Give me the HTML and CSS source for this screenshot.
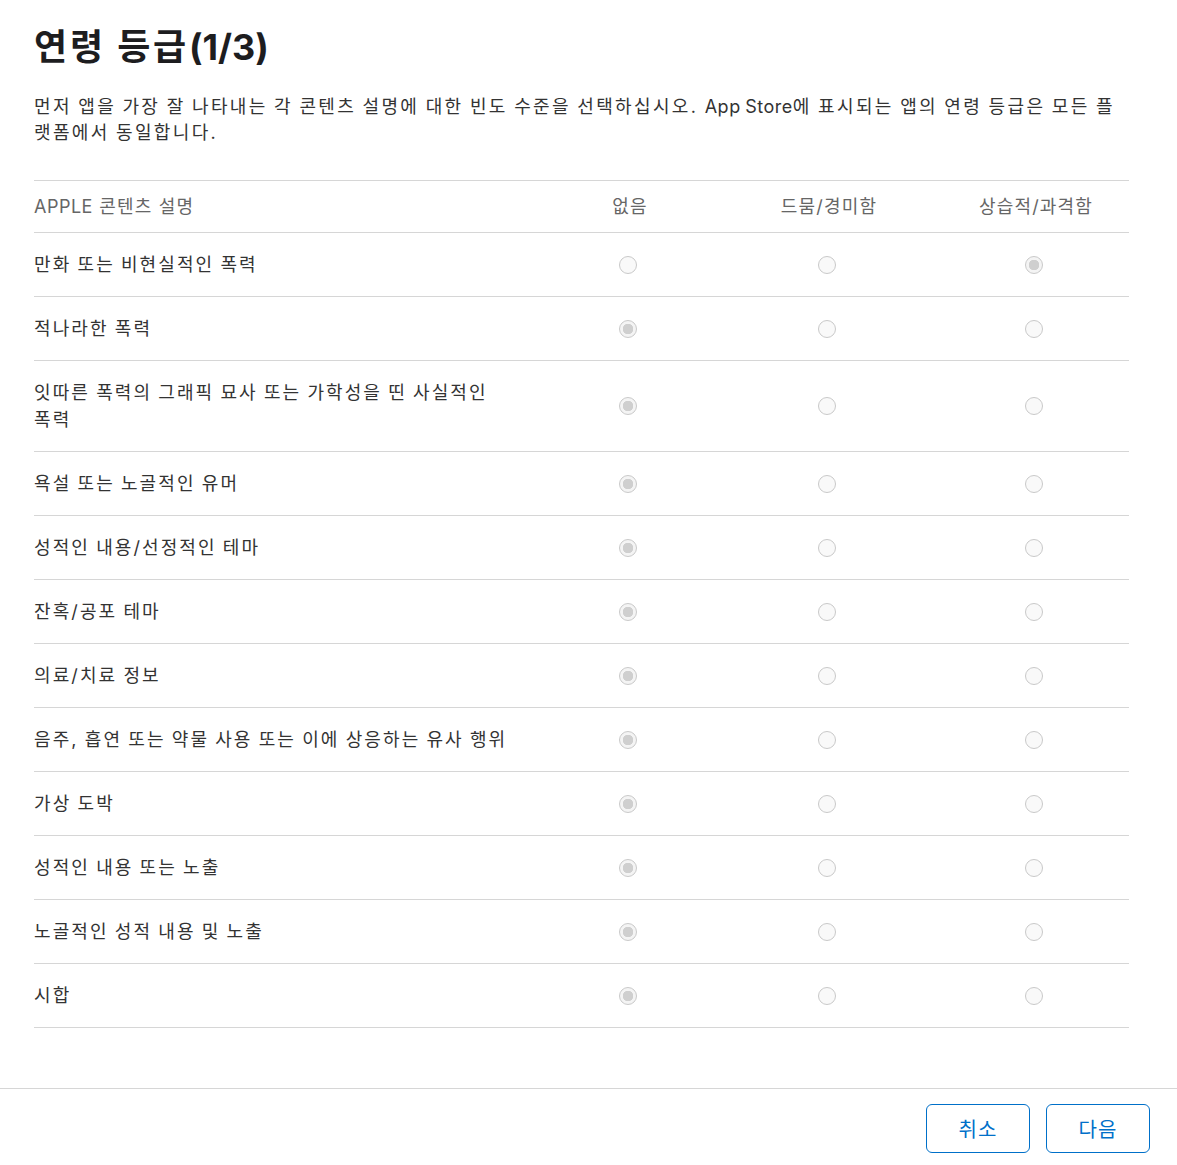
FILE: index.html
```html
<!DOCTYPE html>
<html lang="ko">
<head>
<meta charset="utf-8">
<title>연령 등급</title>
<link rel="stylesheet" href="styles.css">
</head>
<body>
<div class="page">
  <main class="content">
    <h1 class="title">연령 등급<span class="lat">(1/3)</span></h1>
    <p class="desc">먼저 앱을 가장 잘 나타내는 각 콘텐츠 설명에 대한 빈도 수준을 선택하십시오. <span class="lat">App Store</span>에 표시되는 앱의 연령 등급은 모든 플랫폼에서 동일합니다.</p>
    <div class="table">
      <div class="row head">
        <div class="label"><span class="lat">APPLE</span> 콘텐츠 설명</div>
        <div class="cell">없음</div>
        <div class="cell">드뭄/경미함</div>
        <div class="cell">상습적/과격함</div>
      </div>
      <div class="row">
        <div class="label">만화 또는 비현실적인 폭력</div>
        <div class="cell"><span class="radio"></span></div>
        <div class="cell"><span class="radio"></span></div>
        <div class="cell"><span class="radio on"></span></div>
      </div>
      <div class="row">
        <div class="label">적나라한 폭력</div>
        <div class="cell"><span class="radio on"></span></div>
        <div class="cell"><span class="radio"></span></div>
        <div class="cell"><span class="radio"></span></div>
      </div>
      <div class="row">
        <div class="label">잇따른 폭력의 그래픽 묘사 또는 가학성을 띤 사실적인 폭력</div>
        <div class="cell"><span class="radio on"></span></div>
        <div class="cell"><span class="radio"></span></div>
        <div class="cell"><span class="radio"></span></div>
      </div>
      <div class="row">
        <div class="label">욕설 또는 노골적인 유머</div>
        <div class="cell"><span class="radio on"></span></div>
        <div class="cell"><span class="radio"></span></div>
        <div class="cell"><span class="radio"></span></div>
      </div>
      <div class="row">
        <div class="label">성적인 내용/선정적인 테마</div>
        <div class="cell"><span class="radio on"></span></div>
        <div class="cell"><span class="radio"></span></div>
        <div class="cell"><span class="radio"></span></div>
      </div>
      <div class="row">
        <div class="label">잔혹/공포 테마</div>
        <div class="cell"><span class="radio on"></span></div>
        <div class="cell"><span class="radio"></span></div>
        <div class="cell"><span class="radio"></span></div>
      </div>
      <div class="row">
        <div class="label">의료/치료 정보</div>
        <div class="cell"><span class="radio on"></span></div>
        <div class="cell"><span class="radio"></span></div>
        <div class="cell"><span class="radio"></span></div>
      </div>
      <div class="row">
        <div class="label">음주, 흡연 또는 약물 사용 또는 이에 상응하는 유사 행위</div>
        <div class="cell"><span class="radio on"></span></div>
        <div class="cell"><span class="radio"></span></div>
        <div class="cell"><span class="radio"></span></div>
      </div>
      <div class="row">
        <div class="label">가상 도박</div>
        <div class="cell"><span class="radio on"></span></div>
        <div class="cell"><span class="radio"></span></div>
        <div class="cell"><span class="radio"></span></div>
      </div>
      <div class="row">
        <div class="label">성적인 내용 또는 노출</div>
        <div class="cell"><span class="radio on"></span></div>
        <div class="cell"><span class="radio"></span></div>
        <div class="cell"><span class="radio"></span></div>
      </div>
      <div class="row">
        <div class="label">노골적인 성적 내용 및 노출</div>
        <div class="cell"><span class="radio on"></span></div>
        <div class="cell"><span class="radio"></span></div>
        <div class="cell"><span class="radio"></span></div>
      </div>
      <div class="row">
        <div class="label">시합</div>
        <div class="cell"><span class="radio on"></span></div>
        <div class="cell"><span class="radio"></span></div>
        <div class="cell"><span class="radio"></span></div>
      </div>
    </div>
  </main>
  <footer class="footer">
    <button class="btn">취소</button>
    <button class="btn">다음</button>
  </footer>
</div>
</body>
</html>
```

FILE: styles.css
```css
* { box-sizing: border-box; }
html, body { margin: 0; padding: 0; background: #fff; }
body {
  font-family: "Inter", "Noto Sans CJK KR", sans-serif;
  color: #333;
}
.page {
  min-height: 100vh;
  display: flex;
  flex-direction: column;
}
.content {
  flex: 1;
  padding: 27px 48px 0 34px;
}
.lat { letter-spacing: 0.5px; }
.title {
  margin: 0;
  font-size: 36px;
  line-height: 40px;
  font-weight: 700;
  color: #1d1d1f;
  letter-spacing: 2.8px;
}
.title .lat { letter-spacing: 0; }
.desc {
  margin: 27px 10px 0 0;
  font-size: 18px;
  line-height: 26px;
  color: #333;
  letter-spacing: 2.35px;
  word-spacing: -1px;
}
.table {
  margin-top: 34px;
  border-top: 1px solid #d6d6d6;
}
.row {
  display: grid;
  grid-template-columns: 507px 174px 224px 190px;
  align-items: center;
  border-bottom: 1px solid #d6d6d6;
  padding: 18px 0;
  font-size: 18px;
  line-height: 27px;
  letter-spacing: 2.1px;
  word-spacing: -1px;
}
.row.head {
  padding: 12px 0;
  line-height: 27px;
  font-size: 18px;
  color: #666;
  letter-spacing: 1.2px;
  word-spacing: 0;
}
.label {
  padding-right: 22px;
  word-break: keep-all;
}
.cell {
  display: flex;
  justify-content: center;
}
.head .cell { padding-left: 4px; }
.radio {
  display: block;
  width: 18px;
  height: 18px;
  border-radius: 50%;
  border: 1px solid #c9c9c9;
  background: #f9f9f9;
}
.radio.on {
  background: radial-gradient(circle, #cfcfcf 0 5px, #f4f4f4 5.5px);
}
.footer {
  border-top: 1px solid #d6d6d6;
  display: flex;
  justify-content: flex-end;
  gap: 16px;
  padding: 15px 27px 12px 0;
}
.btn {
  width: 104px;
  height: 49px;
  border: 1px solid #0070c9;
  border-radius: 6px;
  background: #fff;
  color: #0070c9;
  font-family: "Inter", "Noto Sans CJK KR", sans-serif;
  font-size: 20px;
  letter-spacing: 1px;
  cursor: pointer;
}
```
